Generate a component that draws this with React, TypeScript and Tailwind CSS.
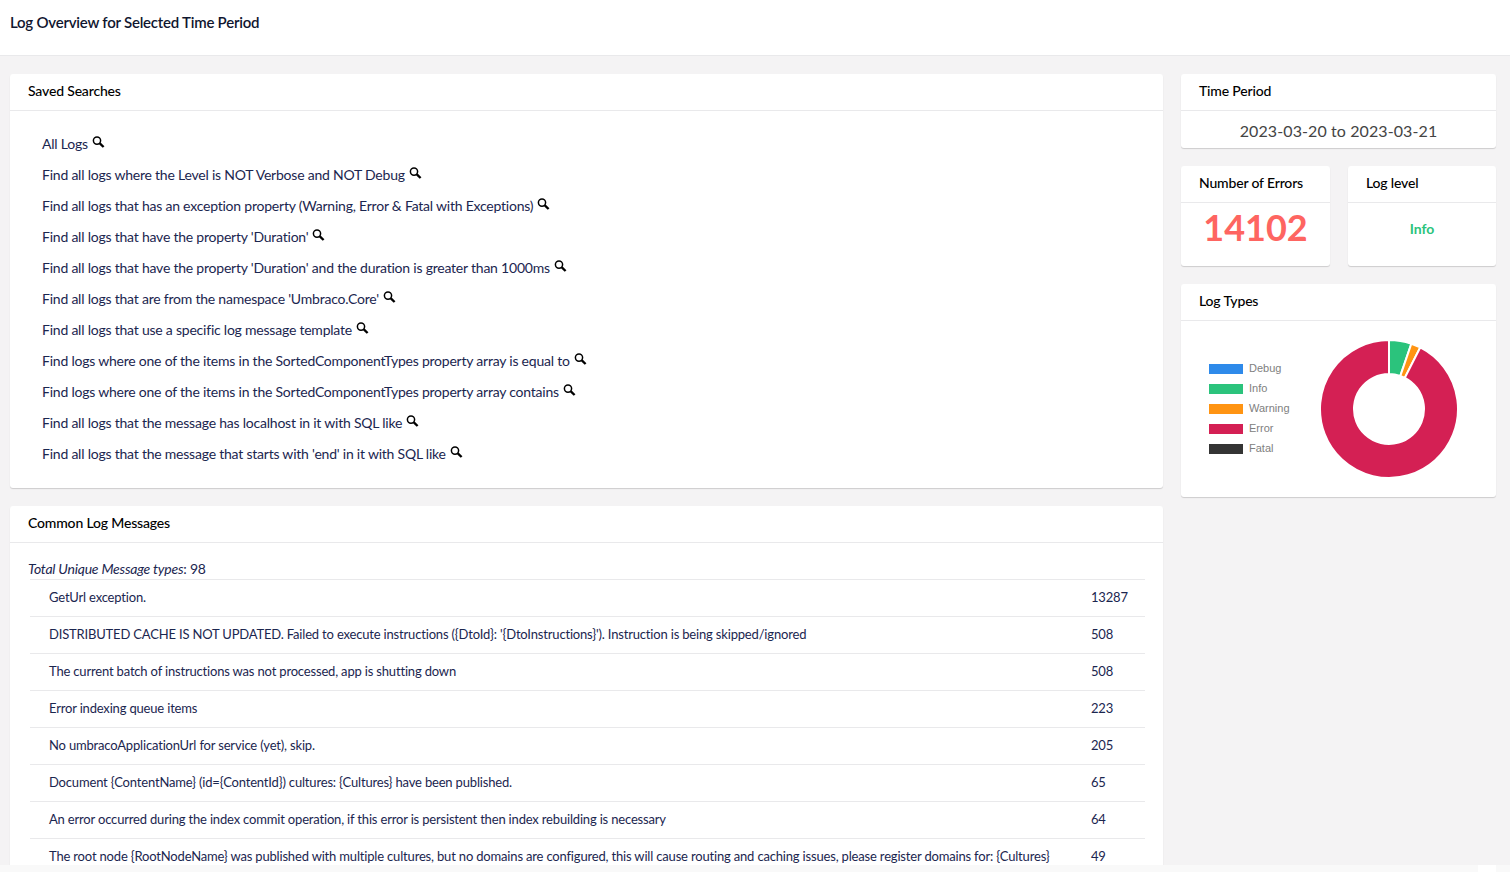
const searches = [
  'All Logs',
  'Find all logs where the Level is NOT Verbose and NOT Debug',
  'Find all logs that has an exception property (Warning, Error & Fatal with Exceptions)',
  "Find all logs that have the property 'Duration'",
  "Find all logs that have the property 'Duration' and the duration is greater than 1000ms",
  "Find all logs that are from the namespace 'Umbraco.Core'",
  'Find all logs that use a specific log message template',
  'Find logs where one of the items in the SortedComponentTypes property array is equal to',
  'Find logs where one of the items in the SortedComponentTypes property array contains',
  'Find all logs that the message has localhost in it with SQL like',
  "Find all logs that the message that starts with 'end' in it with SQL like",
]

const messages = [
  ['GetUrl exception.', '13287'],
  ["DISTRIBUTED CACHE IS NOT UPDATED. Failed to execute instructions ({DtoId}: '{DtoInstructions}'). Instruction is being skipped/ignored", '508'],
  ['The current batch of instructions was not processed, app is shutting down', '508'],
  ['Error indexing queue items', '223'],
  ['No umbracoApplicationUrl for service (yet), skip.', '205'],
  ['Document {ContentName} (id={ContentId}) cultures: {Cultures} have been published.', '65'],
  ['An error occurred during the index commit operation, if this error is persistent then index rebuilding is necessary', '64'],
  ['The root node {RootNodeName} was published with multiple cultures, but no domains are configured, this will cause routing and caching issues, please register domains for: {Cultures}', '49'],
]

const legend = [
  ['Debug', 'bg-[#2e8aea]'],
  ['Info', 'bg-[#2bc37c]'],
  ['Warning', 'bg-[#ff9412]'],
  ['Error', 'bg-[#d42054]'],
  ['Fatal', 'bg-[#343434]'],
]

function arc(from: number, to: number) {
  const R = 69
  const r = 35
  const p = (rad: number, deg: number) => {
    const a = (deg * Math.PI) / 180
    return `${(70 + rad * Math.sin(a)).toFixed(2)} ${(70 - rad * Math.cos(a)).toFixed(2)}`
  }
  const big = to - from > 180 ? 1 : 0
  return `M${p(R, from)} A${R} ${R} 0 ${big} 1 ${p(R, to)} L${p(r, to)} A${r} ${r} 0 ${big} 0 ${p(r, from)} Z`
}

function SearchIcon() {
  return (
    <svg width="13" height="12" viewBox="0 0 13 12" fill="none" stroke="#000" className="ml-[4px] mb-[4px] shrink-0">
      <circle cx="5" cy="4.6" r="3.6" strokeWidth="1.5" />
      <path d="M7.8 7.4 L11.6 11" strokeWidth="2.4" />
    </svg>
  )
}

function Card({ title, className, children }: { title: string; className?: string; children: React.ReactNode }) {
  return (
    <div className={`bg-white rounded-[3px] shadow-[0_1px_1px_0_rgba(0,0,0,0.16)] ${className ?? ''}`}>
      <div className="h-[37px] border-b border-[#e9e9eb] px-[18px] pb-[4px] flex items-center whitespace-nowrap text-[14px] tracking-[-0.17px] font-medium text-black">{title}</div>
      {children}
    </div>
  )
}

export default function App() {
  return (
    <div className="font-['Lato',sans-serif] text-[#1b264f] bg-[#f9f9f9] w-[1510px] h-[872px] overflow-hidden">
      <div className="h-[865px] overflow-hidden bg-[#f4f3f4]">
        <div className="h-[56px] bg-white border-b border-[#e9e9eb] px-[10px] pt-[13px] text-[15px] leading-[18px] font-semibold tracking-[-0.23px] text-[#10162f]">
          Log Overview for Selected Time Period
        </div>
        <div className="flex gap-[18px] pl-[10px] pr-[14px] pt-[18px]">
          <div className="w-[1153px] flex flex-col gap-[18px]">
            <Card title="Saved Searches" className="h-[414px]">
              <ul className="pt-[17px] pl-[32px]">
                {searches.map((s) => (
                  <li key={s} className="h-[31px] flex items-center text-[14px] tracking-[-0.22px] text-[#1b264f]">
                    {s}
                    <SearchIcon />
                  </li>
                ))}
              </ul>
            </Card>
            <Card title="Common Log Messages">
              <div className="px-[18px] pt-[16px] pb-[20px]">
                <div className="text-[14px] leading-[20px] tracking-[-0.22px]">
                  <em>Total Unique Message types</em>: 98
                </div>
                <div className="ml-[2px]">
                  {messages.map(([m, n]) => (
                    <div key={m} className="h-[37px] border-t border-[#e9e9eb] flex items-center whitespace-nowrap text-[13px] tracking-[-0.175px] text-[#1b264f]">
                      <span className="ml-[19px] w-[1042px]">{m}</span>
                      <span>{n}</span>
                    </div>
                  ))}
                </div>
              </div>
            </Card>
          </div>
          <div className="w-[315px] flex flex-col gap-[18px]">
            <Card title="Time Period" className="h-[74px]">
              <div className="text-center text-[16px] tracking-[0.1px] leading-[39px] text-[#444]">2023-03-20 to 2023-03-21</div>
            </Card>
            <div className="flex gap-[18px]">
              <Card title="Number of Errors" className="w-[149px] h-[100px]">
                <div className="text-center text-[36px] leading-[48px] font-bold text-[#fe6561]">14102</div>
              </Card>
              <Card title="Log level" className="w-[148px] h-[100px]">
                <div className="text-center text-[14px] leading-[52px] font-bold text-[#2bc37c]">Info</div>
              </Card>
            </div>
            <Card title="Log Types" className="h-[213px]">
              <div className="flex pl-[28px] pt-[17.5px]">
                <div className="w-[109.5px] pt-[20px] font-['Liberation_Sans',sans-serif] text-[11px] text-[#808080]">
                  {legend.map(([label, color]) => (
                    <div key={label} className="h-[20px] flex items-center gap-[6px]">
                      <span className={`w-[34px] h-[10px] ${color}`} />
                      {label}
                    </div>
                  ))}
                </div>
                <svg width="140" height="140" viewBox="0 0 140 140">
                  <path d={arc(0, 18.9)} fill="#2bc37c" stroke="#fff" strokeWidth="2" />
                  <path d={arc(18.9, 26.9)} fill="#ff9412" stroke="#fff" strokeWidth="2" />
                  <path d={arc(26.9, 360)} fill="#d42054" stroke="#fff" strokeWidth="2" />
                </svg>
              </div>
            </Card>
          </div>
        </div>
      </div>
      <div className="h-[7px] flex justify-end pr-[14px]">
        <div className="w-[18px] bg-white" />
      </div>
    </div>
  )
}
